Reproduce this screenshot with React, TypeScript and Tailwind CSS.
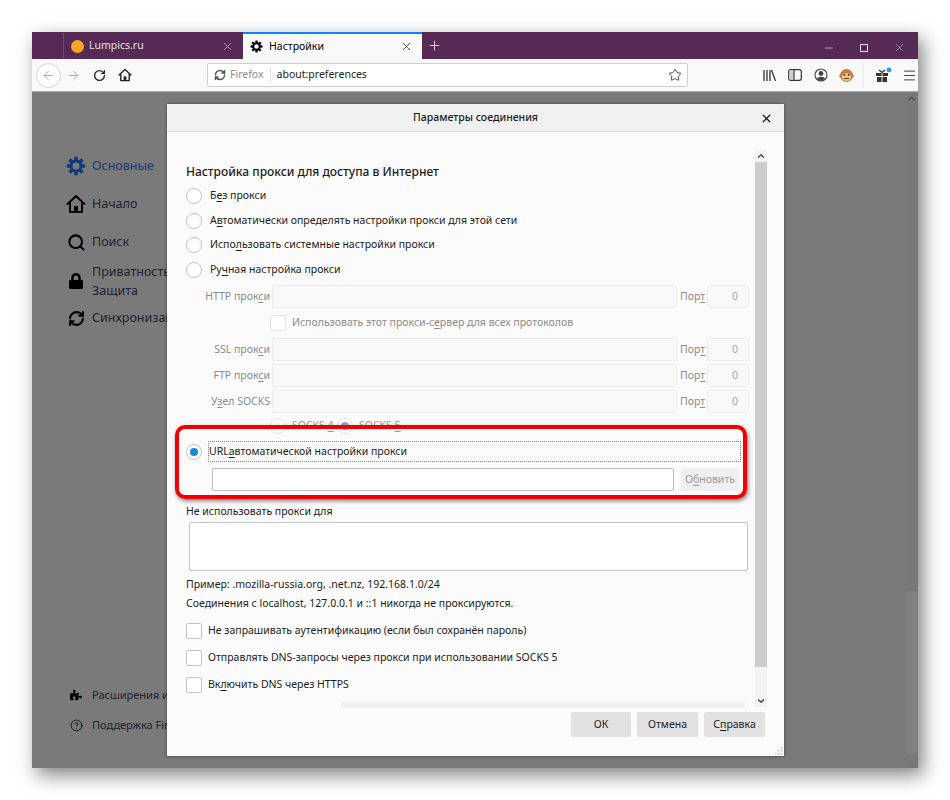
import React from "react";
import { X, Plus, Minus, ArrowLeft, ArrowRight, RotateCw, Star, Search, RefreshCw, CircleHelp, ChevronUp, ChevronDown, Menu } from "lucide-react";
import { FaLock, FaPuzzlePiece } from "react-icons/fa";

function Gear({ size = 18, color = "#000" }: { size?: number; color?: string }) {
  const teeth = [0, 45, 90, 135, 180, 225, 270, 315];
  return (
    <svg width={size} height={size} viewBox="0 0 20 20">
      <circle cx="10" cy="10" r="5" fill="none" stroke={color} strokeWidth="3" />
      {teeth.map((a) => (
        <rect key={a} x="8.2" y="0.8" width="3.6" height="4" fill={color} transform={`rotate(${a} 10 10)`} />
      ))}
    </svg>
  );
}

function Home({ size = 18, color = "#000", sw = 2 }: { size?: number; color?: string; sw?: number }) {
  return (
    <svg width={size} height={size} viewBox="0 0 20 20" fill="none" stroke={color} strokeWidth={sw} strokeLinejoin="round" strokeLinecap="round">
      <path d="M1.5 10 10 2l8.5 8" />
      <path d="M4 9v9h12V9" />
      <rect x="8" y="12" width="4" height="6" fill={color} stroke="none" />
    </svg>
  );
}

function Radio({ checked, dim }: { checked?: boolean; dim?: boolean }) {
  return (
    <span className={`flex h-4 w-4 shrink-0 items-center justify-center rounded-full border bg-white ${dim ? "border-[#e3e3e3]" : "border-[#c4c4c4]"}`}>
      {checked ? <span className={`h-2 w-2 rounded-full ${dim ? "bg-[#8fa6d6]" : "bg-[#1a8ad6]"}`} /> : null}
    </span>
  );
}

function Check({ dim }: { dim?: boolean }) {
  return <span className={`block h-4 w-4 shrink-0 rounded-[2px] border bg-white ${dim ? "border-[#e3e3e3]" : "border-[#c4c4c4]"}`} />;
}

function U({ children }: { children: React.ReactNode }) {
  return <span className="underline underline-offset-2">{children}</span>;
}

function RadioRow({ className, children }: { className: string; children: React.ReactNode }) {
  return (
    <div className={`flex h-4 items-center gap-[7px] ${className}`}>
      <span className="flex w-4 justify-center"><Radio /></span>
      <span className="whitespace-nowrap pl-px">{children}</span>
    </div>
  );
}

function ProxyRow({ label, className }: { label: React.ReactNode; className: string }) {
  return (
    <div className={`flex h-[23px] items-center text-[#8c8c8c] ${className}`}>
      <span className="w-[86px] shrink-0 whitespace-nowrap pr-[2px] text-right">{label}</span>
      <span className="h-full w-[405px] shrink-0 rounded-[2px] border border-[#ececec] bg-[#f9f9f9]" />
      <span className="w-[30px] shrink-0 pl-[3px]">Пор<U>т</U></span>
      <span className="flex h-full w-[42px] shrink-0 items-center justify-end rounded-[2px] border border-[#ececec] bg-[#f9f9f9] pr-[10px] text-[#a8a8a8]">0</span>
    </div>
  );
}

function SideItem({ icon, label, blue, className }: { icon: React.ReactNode; label: React.ReactNode; blue?: boolean; className: string }) {
  return (
    <div className={`flex items-center ${className}`}>
      <span className="flex w-[20px] shrink-0 justify-center">{icon}</span>
      <span className={`ml-[6px] whitespace-nowrap ${blue ? "text-[#13397d]" : "text-[#222030]"}`}>{label}</span>
    </div>
  );
}

function ToolBtn({ children, className }: { children: React.ReactNode; className: string }) {
  return <span className={`flex w-[44px] items-center justify-center ${className}`}>{children}</span>;
}

export default function App() {
  return (
    <div className="h-[800px] w-[950px] overflow-hidden bg-white pl-8 pt-8" style={{ fontFamily: '"Noto Sans", "Open Sans", sans-serif' }}>
      <div className="flex h-[736px] w-[886px] flex-col shadow-[5px_7px_18px_rgba(0,0,0,0.5)]">
        {/* Tab bar */}
        <div className="flex h-[27px] items-end bg-[#562a55] text-[10.5px] text-black">
          <div className="ml-[31px] flex h-[26px] w-[180px] items-center border-l border-[#6d4a6b] pl-[7px] text-[#e8e0e8]">
            <span className="h-[13px] w-[13px] rounded-full bg-[#f5a623]" />
            <span className="ml-[5px]">Lumpics.ru</span>
            <X className="ml-auto mr-[9px] text-[#b9a9b8]" size={13} strokeWidth={1.5} />
          </div>
          <div className="flex h-[27px] w-[179px] items-center border-t-2 border-[#0a84ff] bg-[#f9f9fa] pl-[7px]">
            <Gear size={13} />
            <span className="ml-[6px]">Настройки</span>
            <X className="ml-auto mr-[9px] text-[#333]" size={13} strokeWidth={1.5} />
          </div>
          <Plus className="mb-[6px] ml-[5px] text-[#e0d6df]" size={15} strokeWidth={1.5} />
          <div className="mb-[5px] ml-auto flex items-center text-[#d9ccd7]">
            <Minus size={12} strokeWidth={1.5} />
            <span className="ml-[25px] h-[8px] w-[8px] border border-[#e3dbe2]" />
            <X className="ml-[25px] mr-[12px]" size={13} strokeWidth={1} />
          </div>
        </div>

        {/* Toolbar */}
        <div className="flex h-[33px] shrink-0 items-center border-b border-[#aaa] bg-[#f9f9fa] pl-[4px] text-[#333]">
          <span className="flex h-[25px] w-[25px] items-center justify-center rounded-full border border-[#d5d5d5] bg-white">
            <ArrowLeft size={15} className="text-[#a8a8a8]" strokeWidth={1.5} />
          </span>
          <ArrowRight size={15} className="ml-[5px] text-[#a8a8a8]" strokeWidth={1.5} />
          <RotateCw size={13} className="ml-[12px] text-[#222]" strokeWidth={2.4} />
          <span className="ml-[12px]"><Home size={14} color="#222" /></span>
          <div className="ml-[75px] flex h-[24px] w-[481px] items-center rounded-[2px] border border-[#cfcfcf] bg-white text-[10.5px]">
            <span className="ml-[6px] flex items-center text-[#8c8c8c]">
              <RefreshCw size={12} className="text-[#555]" strokeWidth={3} />
              <span className="ml-[4px]">Firefox</span>
            </span>
            <span className="ml-[6px] h-[16px] w-px bg-[#e3e3e3]" />
            <span className="ml-[6px] text-[#222]">about:preferences</span>
            <Star size={14} className="ml-auto mr-[5px] text-[#333]" strokeWidth={1.5} />
          </div>
          <div className="ml-[75px] flex items-center">
            <svg width="13" height="13" viewBox="0 0 13 13" stroke="#333" strokeWidth="1.3" fill="none"><path d="M1 1v11M4 1v11M7 1v11M8.5 1l4 11" /></svg>
            <svg className="ml-[12px]" width="14" height="12" viewBox="0 0 14 12" fill="none" stroke="#333" strokeWidth="1.2"><rect x="0.7" y="0.7" width="12.6" height="10.6" rx="2" /><rect x="1.5" y="1.5" width="4" height="9" fill="#ccc" stroke="none" /><path d="M6 1v10" /></svg>
            <svg className="ml-[12px]" width="14" height="14" viewBox="0 0 14 14"><circle cx="7" cy="7" r="6" fill="none" stroke="#444" strokeWidth="1.1" /><circle cx="7" cy="5.5" r="2.4" fill="#444" /><path d="M2.8 11a4.5 3.6 0 0 1 8.4 0L7 13z" fill="#444" /></svg>
            <svg className="ml-[11px]" width="15" height="15" viewBox="0 0 15 15"><circle cx="1.6" cy="8" r="1.4" fill="#c77b3a" /><circle cx="13.4" cy="8" r="1.4" fill="#c77b3a" /><circle cx="7.5" cy="7.5" r="6.5" fill="#c77b3a" /><ellipse cx="7.5" cy="9" rx="4.6" ry="4" fill="#f0c48c" /><circle cx="5.4" cy="6.8" r="0.9" fill="#222" /><circle cx="9.6" cy="6.8" r="0.9" fill="#222" /><path d="M5 10.5h5" stroke="#6b3a15" strokeWidth="1" /></svg>
            <span className="ml-[9px] h-[25px] w-px bg-[#ececec]" />
            <svg className="ml-[11px]" width="18" height="16" viewBox="0 0 18 16"><rect x="1" y="6" width="5.5" height="3" fill="#333" /><rect x="7.5" y="6" width="5.5" height="3" fill="#333" /><rect x="2" y="10" width="4.5" height="5" fill="#333" /><rect x="7.5" y="10" width="4.5" height="5" fill="#333" /><path d="M7 5.5 4 3M7 5.5 10 3" stroke="#333" strokeWidth="1.2" /><circle cx="14" cy="3" r="2.4" fill="#2a9ae8" /></svg>
            <Menu size={15} className="ml-[9px] text-[#333]" strokeWidth={1.5} />
          </div>
        </div>

        {/* Page */}
        <div className="relative flex flex-1 bg-[#7a7a7a] text-[12.5px]">
          <div className="flex flex-1 flex-col pl-[34px]">
            <SideItem className="mt-[64px] h-5" blue icon={<Gear size={20} color="#13397d" />} label="Основные" />
            <SideItem className="mt-[18px] h-5" icon={<Home size={20} />} label="Начало" />
            <SideItem className="mt-[18px] h-5" icon={<Search size={19} strokeWidth={2.6} color="#000" />} label="Поиск" />
            <div className="mt-[10px] flex h-[38px] items-center">
              <span className="flex w-[20px] shrink-0 justify-center"><FaLock size={16} color="#000" /></span>
              <span className="ml-[6px] whitespace-nowrap leading-[19px] text-[#222030]">Приватность и<br />Защита</span>
            </div>
            <SideItem className="mt-[8px] h-5" icon={<RefreshCw size={17} strokeWidth={3} color="#000" />} label="Синхронизация" />
            <div className="mt-auto mb-[33px] text-[11px]">
              <SideItem className="h-5" icon={<FaPuzzlePiece size={12} color="#000" />} label="Расширения и темы" />
              <SideItem className="mt-[10px] h-5" icon={<CircleHelp size={13} color="#000" strokeWidth={1.5} />} label="Поддержка Firefox" />
            </div>
          </div>
          <div className="flex w-[13px] shrink-0 flex-col items-center bg-[#787878]">
            <ChevronUp size={11} strokeWidth={3} className="mt-[1px] text-[#4a4a4a]" />
            <span className="mt-[487px] h-[163px] w-[12px] bg-[#808080]" />
          </div>

          {/* Dialog */}
          <div className="absolute left-[135px] top-[12px] flex h-[652px] w-[617px] flex-col bg-[#fbfbfb] text-[10.5px] text-[#1c1b22] shadow-[0_0_3px_rgba(0,0,0,0.5)]">
            <div className="relative flex h-[28px] shrink-0 items-center justify-center rounded-t-[2px] border-b border-[#dedede] bg-[#f0f0f0] font-medium">
              Параметры соединения
              <X className="absolute right-[11px] top-[8px]" size={13} strokeWidth={2.4} />
            </div>
            <div className="relative flex flex-1 flex-col pl-[19px]">
              <div className="mt-[32px] h-4 text-[12px] font-medium leading-4">Настройка прокси для доступа в Интернет</div>
              <RadioRow className="mt-[8px]">Б<U>е</U>з прокси</RadioRow>
              <RadioRow className="mt-[9px]">А<U>в</U>томатически определять настройки прокси для этой сети</RadioRow>
              <RadioRow className="mt-[8px]">Испо<U>л</U>ьзовать системные настройки прокси</RadioRow>
              <RadioRow className="mt-[9px]">Ру<U>ч</U>ная настройка прокси</RadioRow>
              <div className="pl-[-1px]">
                <ProxyRow className="mt-[7px]" label={<>HTTP прок<U>с</U>и</>} />
                <div className="mt-[7px] flex h-4 items-center pl-[84px] text-[#8c8c8c]">
                  <Check dim />
                  <span className="ml-[6px]">Использовать этот прокси-с<U>е</U>рвер для всех протоколов</span>
                </div>
                <ProxyRow className="mt-[7px]" label={<>SSL прок<U>с</U>и</>} />
                <ProxyRow className="mt-[3px]" label={<>FTP прок<U>с</U>и</>} />
                <ProxyRow className="mt-[3px]" label={<>У<U>з</U>ел SOCKS</>} />
                <div className="mt-[5px] flex h-4 items-center pl-[84px] text-[#9a9a9a]">
                  <Radio dim />
                  <span className="ml-[6px] w-[46px]">SOCKS <U>4</U></span>
                  <span className="ml-[-1px]"><Radio dim checked /></span>
                  <span className="ml-[6px]">SOCKS <U>5</U></span>
                </div>
              </div>
              <div className="mt-[7px] flex h-[21px] items-center">
                <span className="flex w-4 justify-center"><Radio checked /></span>
                <span className="ml-[6px] flex h-full w-[533px] items-center border border-dotted border-[#8a8a8a]">URL <U>а</U>втоматической настройки прокси</span>
              </div>
              <div className="mt-[6px] flex h-[23px] items-center pl-[26px]">
                <span className="h-full w-[462px] rounded-[2px] border border-[#bdbdbd] bg-white" />
                <span className="ml-[7px] flex h-full w-[58px] items-center justify-center rounded-[2px] bg-[#efefef] text-[#9a9a9a]">О<U>б</U>новить</span>
              </div>
              <div className="mt-[13px] h-[14px] leading-[14px]">Не использовать прокси для</div>
              <span className="ml-[3px] mt-[4px] block h-[49px] w-[559px] rounded-[2px] border border-[#c4c4c4] bg-white" />
              <div className="mt-[6px] h-[14px] leading-[14px]">Пример: .mozilla-russia.org, .net.nz, 192.168.1.0/24</div>
              <div className="mt-[5px] h-[14px] leading-[14px]">Соединения с localhost, 127.0.0.1 и ::1 никогда не проксируются.</div>
              <div className="mt-[13px] flex h-4 items-center gap-[6px]"><Check /><span>Не запрашивать аутентификацию (если был сохранён пароль)</span></div>
              <div className="mt-[11px] flex h-4 items-center gap-[6px]"><Check /><span>Отправлять DNS-запросы через прокси при использовании SOCKS 5</span></div>
              <div className="mt-[11px] flex h-4 items-center gap-[6px]"><Check /><span>Вк<U>л</U>ючить DNS через HTTPS</span></div>

              {/* Inner scrollbars */}
              <div className="absolute left-[588px] top-[18px] flex h-[557px] w-[12px] flex-col items-center bg-[#f2f2f2]">
                <span className="flex h-[12px] items-center"><ChevronUp size={10} strokeWidth={3} className="text-[#444]" /></span>
                <span className="h-[505px] w-[12px] bg-[#cdcdcd]" />
                <span className="mt-auto flex h-[12px] items-center"><ChevronDown size={10} strokeWidth={3} className="text-[#444]" /></span>
              </div>
              <span className="absolute left-[174px] top-[570px] h-[6px] w-[404px] bg-[#f0f0f0]" />

              {/* Footer buttons */}
              <div className="absolute left-[404px] top-[580px] flex h-[25px] gap-[6px] text-[#222]">
                <span className="flex w-[60px] items-center justify-center rounded-[2px] bg-[#e1e1e1]">ОК</span>
                <span className="flex w-[61px] items-center justify-center rounded-[2px] bg-[#e1e1e1]">Отмена</span>
                <span className="flex w-[61px] items-center justify-center rounded-[2px] bg-[#e1e1e1]">С<U>п</U>равка</span>
              </div>
              <svg className="absolute bottom-[1px] right-[1px]" width="8" height="8" viewBox="0 0 8 8" fill="#bbb">
                <rect x="6" y="0" width="1.5" height="1.5" /><rect x="3" y="3" width="1.5" height="1.5" /><rect x="6" y="3" width="1.5" height="1.5" /><rect x="0" y="6" width="1.5" height="1.5" /><rect x="3" y="6" width="1.5" height="1.5" /><rect x="6" y="6" width="1.5" height="1.5" />
              </svg>
            </div>

            {/* Red annotation */}
            <span className="pointer-events-none absolute left-[8px] top-[321px] h-[74px] w-[572px] rounded-[10px] border-[4px] border-[#f00000] shadow-[1px_2px_4px_rgba(0,0,0,0.5)]" />
          </div>
        </div>
      </div>
    </div>
  );
}
